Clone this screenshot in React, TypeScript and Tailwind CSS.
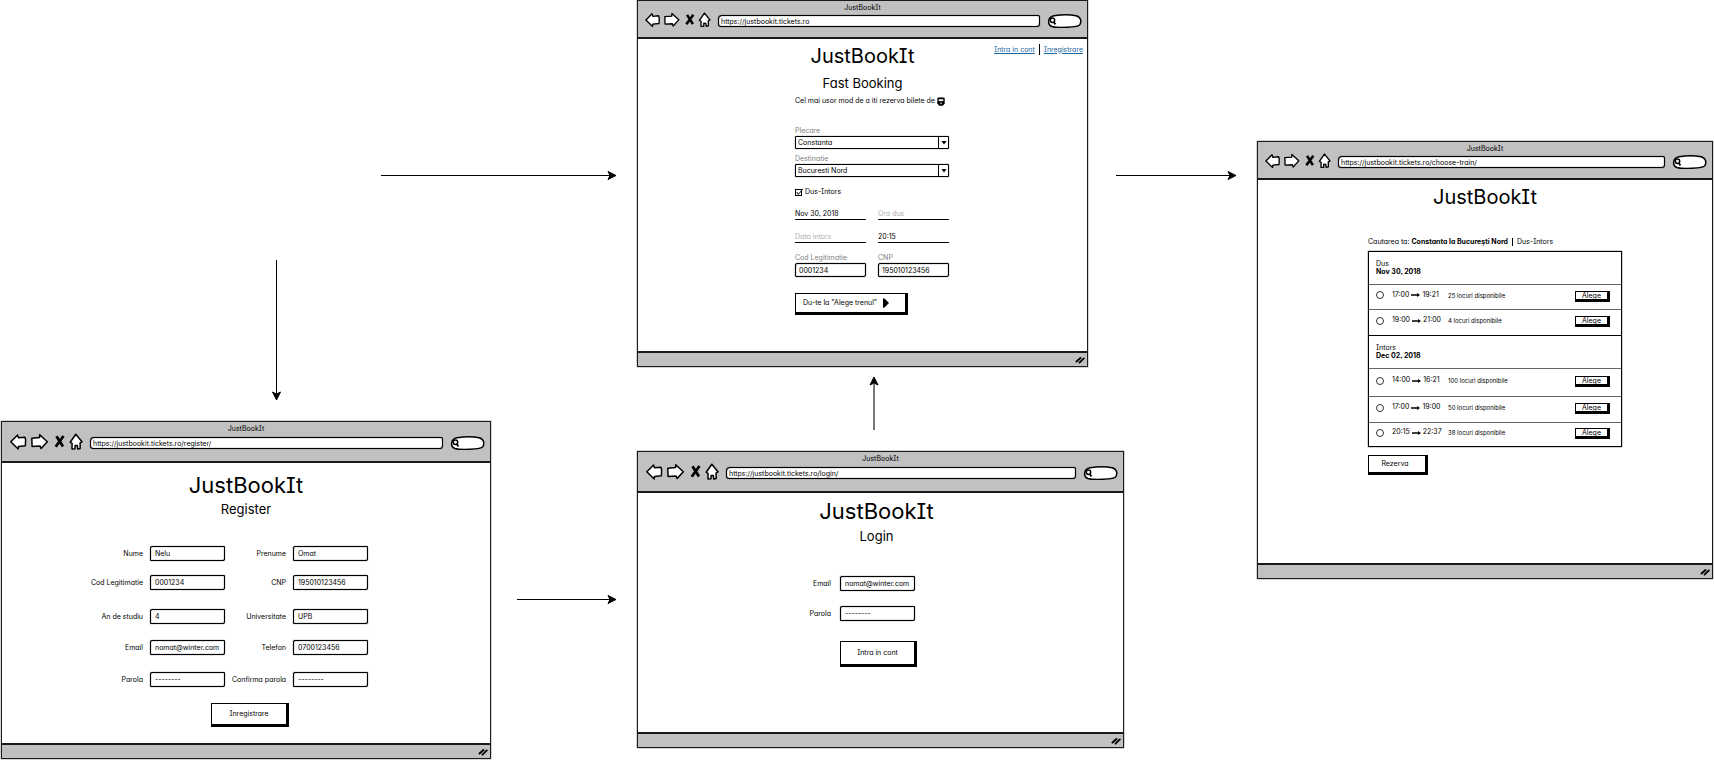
import type { ReactNode } from "react";

const SANS = "font-['Inter','Liberation_Sans',sans-serif] [font-feature-settings:'cv08','cv11','ss03']";
const INPUT =
  "h-[15px] w-[75px] border border-black rounded-[2px_1px_2px_1px] bg-white px-1 text-[7px] leading-none text-black outline-none shadow-[0_0_1px_#000,inset_0_0_1px_#000]";

function NavIcons({ size }: { size: string }) {
  return (
    <svg viewBox="0 0 74 20" className={`shrink-0 ${size}`} fill="#fff" stroke="#000" strokeWidth="1.5" strokeLinejoin="round" aria-hidden="true">
      <path d="M.8 8.800 7.600 2l.9 2.800 6.400-.6.700 2.400-.2 6.200-6.900.6-.3 2.600z" />
      <path d="M21.800 5.200l7.700-.6.2-2.900 7.600 7-6.200 6.800-1-2.400-8 .3z" />
      <path d="M46.500 3.200l6.500 10.300M53.500 3l-7.800 10.700" fill="none" strokeWidth="2.800" />
      <path d="M65.800 1.200l6.200 7.600-1.900 1 .1 5.600-2.400.6-.5-3.400-2.200-.2-.1 3.400-3 .1.100-5.600-1.900-1z" />
    </svg>
  );
}

function SearchPill() {
  return (
    <svg viewBox="0 0 35 15" className="h-[15px] w-[35px] shrink-0" fill="#fff" stroke="#000" strokeWidth="1.5" aria-hidden="true">
      <path d="M7 1.800C14 .7 24 .7 29 1.800c5 1.200 5.500 5.400 4 8.700-1.600 3.400-24 3.300-28 2C0 10.500.500 3 7 1.800z" />
      <circle cx="5.500" cy="6.300" r="2.200" />
      <path d="M6.800 8.200l1.700 2.200" strokeWidth="1.800" />
    </svg>
  );
}

type WindowProps = { url: string; place: string; head: string; bar: string; icons: string; children: ReactNode };

function BrowserWindow({ url, place, head, bar, icons, children }: WindowProps) {
  return (
    <section className={`absolute flex flex-col border border-[#1a1a1a] bg-white shadow-[0_0_1px_#000] ${place}`}>
      <header className={`flex flex-col border-b-2 border-[#1a1a1a] bg-[#c1c1c1] ${head}`}>
        <p className="pt-0.5 text-center text-[7px] leading-[9px]">JustBookIt</p>
        <div className={`flex items-center pr-[5px] ${bar}`}>
          <NavIcons size={icons} />
          <input
            aria-label="Address"
            defaultValue={url}
            className="ml-1.5 h-3 min-w-0 flex-1 rounded-[4px_2px_3px_3px] border border-black bg-white px-0.5 text-[7px] leading-none outline-none shadow-[0_0_1px_#000,inset_0_0_1px_#000]"
          />
          <span className="ml-[7px] flex">
            <SearchPill />
          </span>
        </div>
      </header>
      <main className="flex flex-1 flex-col">{children}</main>
      <footer className="flex h-[15px] items-center justify-end border-t-2 border-[#1a1a1a] bg-[#c1c1c1] pr-0.5">
        <svg viewBox="0 0 10 8" className="h-2 w-2.5" stroke="#000" strokeWidth="1.900" strokeLinecap="round" aria-hidden="true">
          <path d="M1.500 5.500l4-3.500M4.500 6.600l4.300-4.200" />
        </svg>
      </footer>
    </section>
  );
}

function Field({ id, label, value, type = "text" }: { id: string; label: string; value: string; type?: string }) {
  return (
    <>
      <label htmlFor={id} className="text-right text-[7px] leading-[15px] whitespace-nowrap">
        {label}
      </label>
      <input id={id} type={type} defaultValue={value} className={INPUT} />
    </>
  );
}

function Select({ id, label, value }: { id: string; label: string; value: string }) {
  return (
    <div className="flex flex-col">
      <label htmlFor={id} className="text-[7px] leading-[10px] text-[#808080]">
        {label}
      </label>
      <div className="relative flex">
        <select id={id} defaultValue={value} className="h-[13px] w-full appearance-none rounded-[1px] border border-black bg-white px-0.5 text-[7px] leading-none outline-none shadow-[0_0_1px_#000]">
          <option>{value}</option>
        </select>
        <span className="pointer-events-none absolute inset-y-0 right-0 flex w-[11px] items-center justify-center border-l border-black">
          <svg viewBox="0 0 6 4" className="h-1 w-1.5" aria-hidden="true">
            <path d="M.5 0h5L3 3.600z" />
          </svg>
        </span>
      </div>
    </div>
  );
}

const LINE_INPUT = "h-[13px] w-full border-b border-black text-[7px] outline-none placeholder:text-[#b0b0b0]";
const SMALL_INPUT =
  "h-3.5 w-full rounded-[2px_1px_2px_1px] border border-black px-[3px] outline-none shadow-[0_0_1px_#000,inset_0_0_1px_#000]";

function Home() {
  return (
    <>
      <nav className="absolute top-[43px] right-1 flex items-center text-[7px] leading-[10px]">
        <a href="#login" className="text-[#1b66a5] underline">Intra in cont</a>
        <span className="mx-1 h-[11px] w-px bg-black" />
        <a href="#register" className="text-[#1b66a5] underline">Inregistrare</a>
      </nav>
      <h1 className="mt-1 text-center text-[20px] leading-[26px]">JustBookIt</h1>
      <h2 className="mt-1.5 text-center text-[13px] leading-4">Fast Booking</h2>
      <form className="ml-[157px] flex w-[154px] flex-col pt-[5px]">
        <p className="flex items-center gap-0.5 text-[7px] leading-[10px] whitespace-nowrap">
          Cel mai usor mod de a iti rezerva bilete de
          <svg viewBox="0 0 8 9" className="h-[9px] w-2" aria-hidden="true">
            <path d="M.3.800Q4-.4 7.700.800v5.400L6 8.700H2L.3 6.200z" />
            <path d="M1.700 2.300h4.600v1.800H1.700z" fill="#fff" />
            <circle cx="4" cy="6.300" r=".8" fill="#fff" />
          </svg>
        </p>
        <div className="mt-5 flex flex-col gap-[5px]">
          <Select id="from" label="Plecare" value="Constanta" />
          <Select id="to" label="Destinatie" value="Bucuresti Nord" />
        </div>
        <label className="mt-2.5 flex items-center gap-[3px] text-[7px] leading-[10px]">
          <span className="relative flex">
            <input type="checkbox" defaultChecked className="size-[7px] appearance-none border border-black" />
            <svg viewBox="0 0 8 8" className="pointer-events-none absolute inset-0 size-2" fill="none" stroke="#000" strokeWidth="1" aria-hidden="true">
              <path d="M1.700 3l1.600 2.500L7.800 0" />
            </svg>
          </span>
          Dus-Intors
        </label>
        <div className="mt-2.5 grid grid-cols-2 gap-x-3 gap-y-2.5">
          <input aria-label="Data dus" placeholder="Data dus" defaultValue="Nov 30, 2018" className={LINE_INPUT} />
          <input aria-label="Ora dus" placeholder="Ora dus" className={LINE_INPUT} />
          <input aria-label="Data intors" placeholder="Data intors" className={LINE_INPUT} />
          <input aria-label="Ora intors" placeholder="Ora intors" defaultValue="20:15" className={LINE_INPUT} />
        </div>
        <div className="mt-2.5 grid grid-cols-2 gap-x-3 text-[7px] leading-[10px]">
          <label htmlFor="home-cod" className="text-[#808080]">Cod Legitimatie</label>
          <label htmlFor="home-cnp" className="text-[#808080]">CNP</label>
          <input id="home-cod" defaultValue="0001234" className={SMALL_INPUT} />
          <input id="home-cnp" defaultValue="195010123456" className={SMALL_INPUT} />
        </div>
        <button type="button" className="mt-4 flex h-5 w-[111px] items-center gap-1.5 border border-black bg-white pl-[7px] text-[7px] whitespace-nowrap shadow-[1px_1px_0_1px_#000]">
          Du-te la "Alege trenul"
          <svg viewBox="0 0 6 10" className="h-2.5 w-1.5" aria-hidden="true">
            <path d="M0 0l2 1 4 4-4 4-2 1z" />
          </svg>
        </button>
      </form>
    </>
  );
}

function Login() {
  return (
    <>
      <h1 className="mt-1 pr-2 text-center text-[22px] leading-7">JustBookIt</h1>
      <h2 className="mt-[3px] pr-2 text-center text-[13px] leading-4">Login</h2>
      <form className="ml-[152px] grid grid-cols-[41px_75px] grid-rows-[30px_35px_24px] gap-x-[9px] pt-8">
        <Field id="login-email" label="Email" value="nomat@winter.com" />
        <Field id="login-parola" label="Parola" value="--------" />
        <button type="button" className="col-start-2 border border-black bg-white text-[7px] shadow-[1px_1px_0_1px_#000]">Intra in cont</button>
      </form>
    </>
  );
}

function Register() {
  return (
    <>
      <h1 className="mt-2 text-center text-[22px] leading-7">JustBookIt</h1>
      <h2 className="mt-0.5 text-center text-[13px] leading-4">Register</h2>
      <form className="flex flex-col pt-[29px] pl-[81px]">
        <div className="grid grid-cols-[60px_75px_54px_75px] grid-rows-[29px_34px_31px_32px_15px] gap-x-[7px]">
          <Field id="nume" label="Nume" value="Nelu" />
          <Field id="prenume" label="Prenume" value="Omat" />
          <Field id="cod" label="Cod Legitimatie" value="0001234" />
          <Field id="cnp" label="CNP" value="195010123456" />
          <Field id="an" label="An de studiu" value="4" />
          <Field id="uni" label="Universitate" value="UPB" />
          <Field id="email" label="Email" value="nomat@winter.com" />
          <Field id="telefon" label="Telefon" value="0700123456" />
          <Field id="parola" label="Parola" value="--------" />
          <Field id="confirma" label="Confirma parola" value="--------" />
        </div>
        <button type="button" className="mt-4 ml-32 h-[22px] w-[76px] border border-black bg-white text-[7px] shadow-[1px_1px_0_1px_#000]">Inregistrare</button>
      </form>
    </>
  );
}

type Train = { from: string; to: string; seats: string; height: string };

const OUTBOUND: Train[] = [
  { from: "17:00", to: "19:21", seats: "25 locuri disponibile", height: "h-[25px]" },
  { from: "19:00", to: "21:00", seats: "4 locuri disponibile", height: "h-[26px]" },
];
const RETURN: Train[] = [
  { from: "14:00", to: "16:21", seats: "100 locuri disponibile", height: "h-7" },
  { from: "17:00", to: "19:00", seats: "50 locuri disponibile", height: "h-[26px]" },
  { from: "20:15", to: "22:37", seats: "38 locuri disponibile", height: "h-6" },
];

function Trip({ title, date, name, trains }: { title: string; date: string; name: string; trains: Train[] }) {
  return (
    <>
      <div className="flex h-8 flex-col justify-center pl-[7px] text-[7px] leading-[8px]">
        <p>{title}</p>
        <p className="font-bold">{date}</p>
      </div>
      {trains.map((t) => (
        <div key={t.from} className={`flex items-center border-t border-[#666] pb-1 pl-[7px] text-[6px] ${t.height}`}>
          <label className="flex w-[72px] items-center text-[7px] whitespace-nowrap">
            <input type="radio" name={name} className="mr-2 size-2 shrink-0 appearance-none rounded-full border border-[#333]" />
            {t.from}
            <svg viewBox="0 0 9 4" className="mx-0.5 h-1 w-[9px]" aria-hidden="true">
              <path d="M0 1.300h6V0l3 2-3 2V2.700H0z" />
            </svg>
            {t.to}
          </label>
          <span className="flex-1">{t.seats}</span>
          <button type="button" className="mr-[13px] h-[9px] w-[33px] border border-black bg-white text-[7px] leading-[7px] shadow-[1px_1px_0_1px_#000]">Alege</button>
        </div>
      ))}
    </>
  );
}

function ChooseTrain() {
  return (
    <>
      <h1 className="mt-1 text-center text-[20px] leading-[26px]">JustBookIt</h1>
      <div className="ml-[110px] flex w-[254px] flex-col pt-[27px]">
        <p className="flex items-center gap-1 text-[7px] leading-[10px] whitespace-nowrap">
          <span>Cautarea ta: <b>Constanta la Bucureşti Nord</b></span>
          <span className="h-2 w-px bg-black" />
          <span>Dus-Intors</span>
        </p>
        <div className="mt-1 flex flex-col border border-black shadow-[0_0_1px_#000]">
          <Trip title="Dus" date="Nov 30, 2018" name="dus" trains={OUTBOUND} />
          <div className="border-t border-black" />
          <Trip title="Intors" date="Dec 02, 2018" name="intors" trains={RETURN} />
        </div>
        <button type="button" className="mt-2 h-[18px] w-[58px] border border-black bg-white pr-1 text-[7px] shadow-[1px_1px_0_1px_#000]">Rezerva</button>
      </div>
    </>
  );
}

export default function App() {
  return (
    <div className={`relative min-h-screen w-full overflow-hidden bg-white text-black ${SANS}`}>
      <svg className="absolute top-0 left-0 h-[762px] w-[1714px]" fill="#000" stroke="#000" aria-hidden="true">
        <path d="M381 175.500H610M276.500 260V394M1116 175.500H1230M517 599.500H610" />
        <path d="M874 430V384" stroke="#777" strokeWidth="2" />
        <path d="M616 175.500l-8-4 2 4-2 4zM1236 175.500l-8-4 2 4-2 4zM616 599.500l-8-4 2 4-2 4zM276.500 400l-4-8 4 2 4-2zM874 377l-4 8 4-2 4 2z" />
      </svg>
      <BrowserWindow url="https://justbookit.tickets.ro" place="left-[637px] top-0 h-[367px] w-[451px]" head="h-[38px]" bar="pl-[7px]" icons="h-[18px] w-[67px]">
        <Home />
      </BrowserWindow>
      <BrowserWindow url="https://justbookit.tickets.ro/choose-train/" place="left-[1257px] top-[141px] h-[438px] w-[456px]" head="h-[38px]" bar="pl-[7px]" icons="h-[18px] w-[67px]">
        <ChooseTrain />
      </BrowserWindow>
      <BrowserWindow url="https://justbookit.tickets.ro/register/" place="left-[1px] top-[421px] h-[338px] w-[490px]" head="h-[41px]" bar="pl-2" icons="h-5 w-[74px]">
        <Register />
      </BrowserWindow>
      <BrowserWindow url="https://justbookit.tickets.ro/login/" place="left-[637px] top-[451px] h-[297px] w-[487px]" head="h-[41px]" bar="pl-2" icons="h-5 w-[74px]">
        <Login />
      </BrowserWindow>
    </div>
  );
}
